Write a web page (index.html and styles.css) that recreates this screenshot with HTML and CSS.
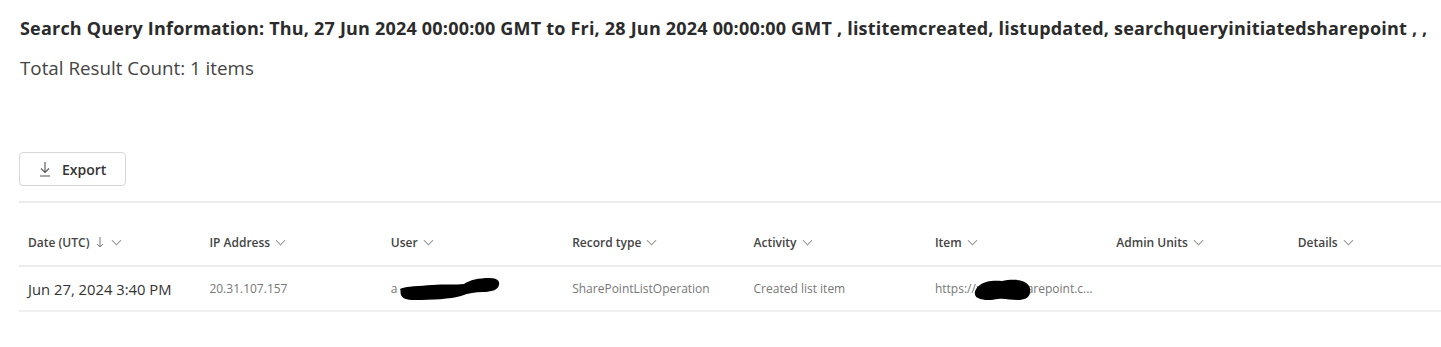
FILE: index.html
```html
<!DOCTYPE html>
<html lang="en">
<head>
    <meta charset="UTF-8">
    <meta name="viewport" content="width=device-width, initial-scale=1.0">
    <title>Audit Search Results</title>
    <link rel="stylesheet" href="styles.css">
</head>
<body>
<div class="page">
    <h1 class="query-info">Search Query Information: Thu, 27 Jun 2024 00:00:00 GMT to Fri, 28 Jun 2024 00:00:00 GMT , listitemcreated, listupdated, searchqueryinitiatedsharepoint , ,</h1>
    <p class="result-count">Total Result Count: 1 items</p>

    <div class="toolbar">
        <button type="button" class="export-btn">
            <svg class="export-icon" width="14" height="16" viewBox="0 0 14 16">
                <path d="M7 1v10M3 7.5l4 4 4-4M2 15h10" fill="none" stroke="#555" stroke-width="1.1"/>
            </svg>
            Export
        </button>
    </div>

    <table class="results">
        <colgroup>
            <col class="col"><col class="col"><col class="col"><col class="col">
            <col class="col"><col class="col"><col class="col"><col>
        </colgroup>
        <thead>
            <tr>
                <th>Date (UTC) <svg class="sort" width="8" height="12" viewBox="0 0 8 12"><path d="M4 1v10M1 8l3 3 3-3" fill="none" stroke="#777" stroke-width="1"/></svg> <span class="chev"></span></th>
                <th>IP Address <span class="chev"></span></th>
                <th>User <span class="chev"></span></th>
                <th>Record type <span class="chev"></span></th>
                <th>Activity <span class="chev"></span></th>
                <th>Item <span class="chev"></span></th>
                <th>Admin Units <span class="chev"></span></th>
                <th>Details <span class="chev"></span></th>
            </tr>
        </thead>
        <tbody>
            <tr>
                <td class="date">Jun 27, 2024 3:40 PM</td>
                <td>20.31.107.157</td>
                <td class="redacted">a<svg class="blob blob-user" width="108" height="26" viewBox="0 0 108 26">
                    <path d="M6 14c6-3 20-3 32-4 12-1 24 0 32-1 6-4 14-6 26-6 7 0 10 3 9 7-1 5-8 7-16 7-8 0-14 1-22 4-10 3-30 4-46 4-9 0-13-2-14-5-1-3 0-5-1-6z" fill="#000"/>
                </svg></td>
                <td>SharePointListOperation</td>
                <td>Created list item</td>
                <td class="redacted">https://xxxxxxsharepoint.c...<svg class="blob blob-item" width="58" height="22" viewBox="0 0 58 22">
                    <path d="M6 6c4-4 14-5 22-4 6-1 14-2 20 0 7 2 9 7 8 12-1 5-6 7-12 7-8 0-14-2-20-1-6 1-14 2-20-1-5-2-4-9 2-13z" fill="#000"/>
                </svg></td>
                <td></td>
                <td></td>
            </tr>
        </tbody>
    </table>
</div>
</body>
</html>
```

FILE: styles.css
```css
body {
    margin: 0;
    background-color: #fff;
    font-family: "Open Sans", "Noto Sans", sans-serif;
    color: #333;
}

.page {
    padding: 16px 0 0 19px;
}

.query-info {
    margin: 0 0 0 1px;
    font-size: 18px;
    font-weight: 700;
    letter-spacing: 0.2px;
    line-height: 24px;
    color: #2b2b2b;
    white-space: nowrap;
}

.result-count {
    margin: 16px 0 0 1px;
    font-size: 18.8px;
    line-height: 24px;
    color: #444;
}

.toolbar {
    margin-top: 72px;
    padding-bottom: 15px;
    border-bottom: 2px solid #ececec;
}

.export-btn {
    display: flex;
    align-items: center;
    gap: 10px;
    height: 34px;
    width: 107px;
    padding: 0 0 0 18px;
    background-color: #fff;
    border: 1px solid #d6d6d6;
    border-radius: 4px;
    font-family: "Open Sans", "Noto Sans", sans-serif;
    font-size: 14px;
    font-weight: 600;
    color: #333;
}

.results {
    width: 100%;
    border-collapse: collapse;
    table-layout: fixed;
}

.results .col {
    width: 181.4px;
}

.results th {
    height: 46px;
    padding: 16px 0 0 9px;
    text-align: left;
    vertical-align: middle;
    font-size: 12px;
    font-weight: 600;
    color: #444;
    border-bottom: 2px solid #ececec;
    white-space: nowrap;
}

.results td {
    height: 43px;
    padding: 0 0 0 9px;
    font-size: 12px;
    color: #777;
    border-bottom: 2px solid #efefef;
    white-space: nowrap;
    overflow: hidden;
}

.results td.date {
    font-size: 14.8px;
    color: #333;
}

.sort {
    margin: 0 2px 0 3px;
    vertical-align: -1px;
}

.chev {
    display: inline-block;
    width: 6px;
    height: 6px;
    margin-left: 4px;
    border-right: 1px solid #999;
    border-bottom: 1px solid #999;
    transform: translateY(-3px) rotate(45deg);
}

.redacted {
    position: relative;
}

.blob {
    position: absolute;
}

.blob-user {
    left: 12px;
    top: 8px;
}

.blob-item {
    left: 48px;
    top: 12px;
}
```
